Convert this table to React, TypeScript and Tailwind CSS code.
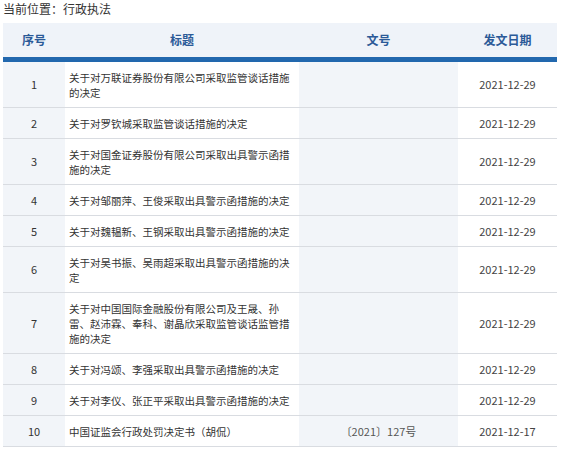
const rows = [
  { no: 1, title: '关于对万联证券股份有限公司采取监管谈话措施的决定', doc: '', date: '2021-12-29' },
  { no: 2, title: '关于对罗钦城采取监管谈话措施的决定', doc: '', date: '2021-12-29' },
  { no: 3, title: '关于对国金证券股份有限公司采取出具警示函措施的决定', doc: '', date: '2021-12-29' },
  { no: 4, title: '关于对邹丽萍、王俊采取出具警示函措施的决定', doc: '', date: '2021-12-29' },
  { no: 5, title: '关于对魏韫新、王钢采取出具警示函措施的决定', doc: '', date: '2021-12-29' },
  { no: 6, title: '关于对吴书振、吴雨超采取出具警示函措施的决定', doc: '', date: '2021-12-29' },
  { no: 7, title: '关于对中国国际金融股份有限公司及王晟、孙雷、赵沛霖、奉科、谢晶欣采取监管谈话监管措施的决定', doc: '', date: '2021-12-29' },
  { no: 8, title: '关于对冯颂、李强采取出具警示函措施的决定', doc: '', date: '2021-12-29' },
  { no: 9, title: '关于对李仪、张正平采取出具警示函措施的决定', doc: '', date: '2021-12-29' },
  { no: 10, title: '中国证监会行政处罚决定书（胡侃）', doc: '〔2021〕127号', date: '2021-12-17' },
];

export default function App() {
  return (
    <div
      className="w-[565px] h-[453px] bg-white text-[#333] overflow-hidden"
      style={{ fontFamily: '"Noto Sans CJK SC", "Liberation Sans", sans-serif' }}
    >
      <div className="h-[23px] pl-[3px] pt-px text-[12px] leading-[16px] text-[#333]">当前位置：行政执法</div>
      <table className="ml-[3px] w-[554px] table-fixed border-collapse">
        <colgroup>
          <col className="w-[62px]" />
          <col className="w-[234px]" />
          <col className="w-[159px]" />
          <col className="w-[99px]" />
        </colgroup>
        <thead>
          <tr className="bg-[#eff3f9] h-[34px] text-[12px] font-bold text-[#2b5a98]">
            <th className="font-bold">序号</th>
            <th className="font-bold">标题</th>
            <th className="font-bold">文号</th>
            <th className="font-bold">发文日期</th>
          </tr>
          <tr>
            <td colSpan={4} className="h-[5px] p-0 bg-[#2268ae]"></td>
          </tr>
        </thead>
        <tbody className="text-[10.5px] leading-[15px]">
          {rows.map((r) => (
            <tr key={r.no} className="border-b border-[#d9dce1]">
              <td className="bg-[#f2f5f9] text-center py-[7.5px] text-[11px]">{r.no}</td>
              <td className="py-[7.5px] pl-[4px] pr-[4px] align-middle">{r.title}</td>
              <td className="bg-[#f2f5f9] text-center py-[7.5px] text-[11px] text-[#555]">{r.doc}</td>
              <td className="text-center py-[7.5px] text-[11px] text-[#444]">{r.date}</td>
            </tr>
          ))}
        </tbody>
      </table>
    </div>
  );
}
